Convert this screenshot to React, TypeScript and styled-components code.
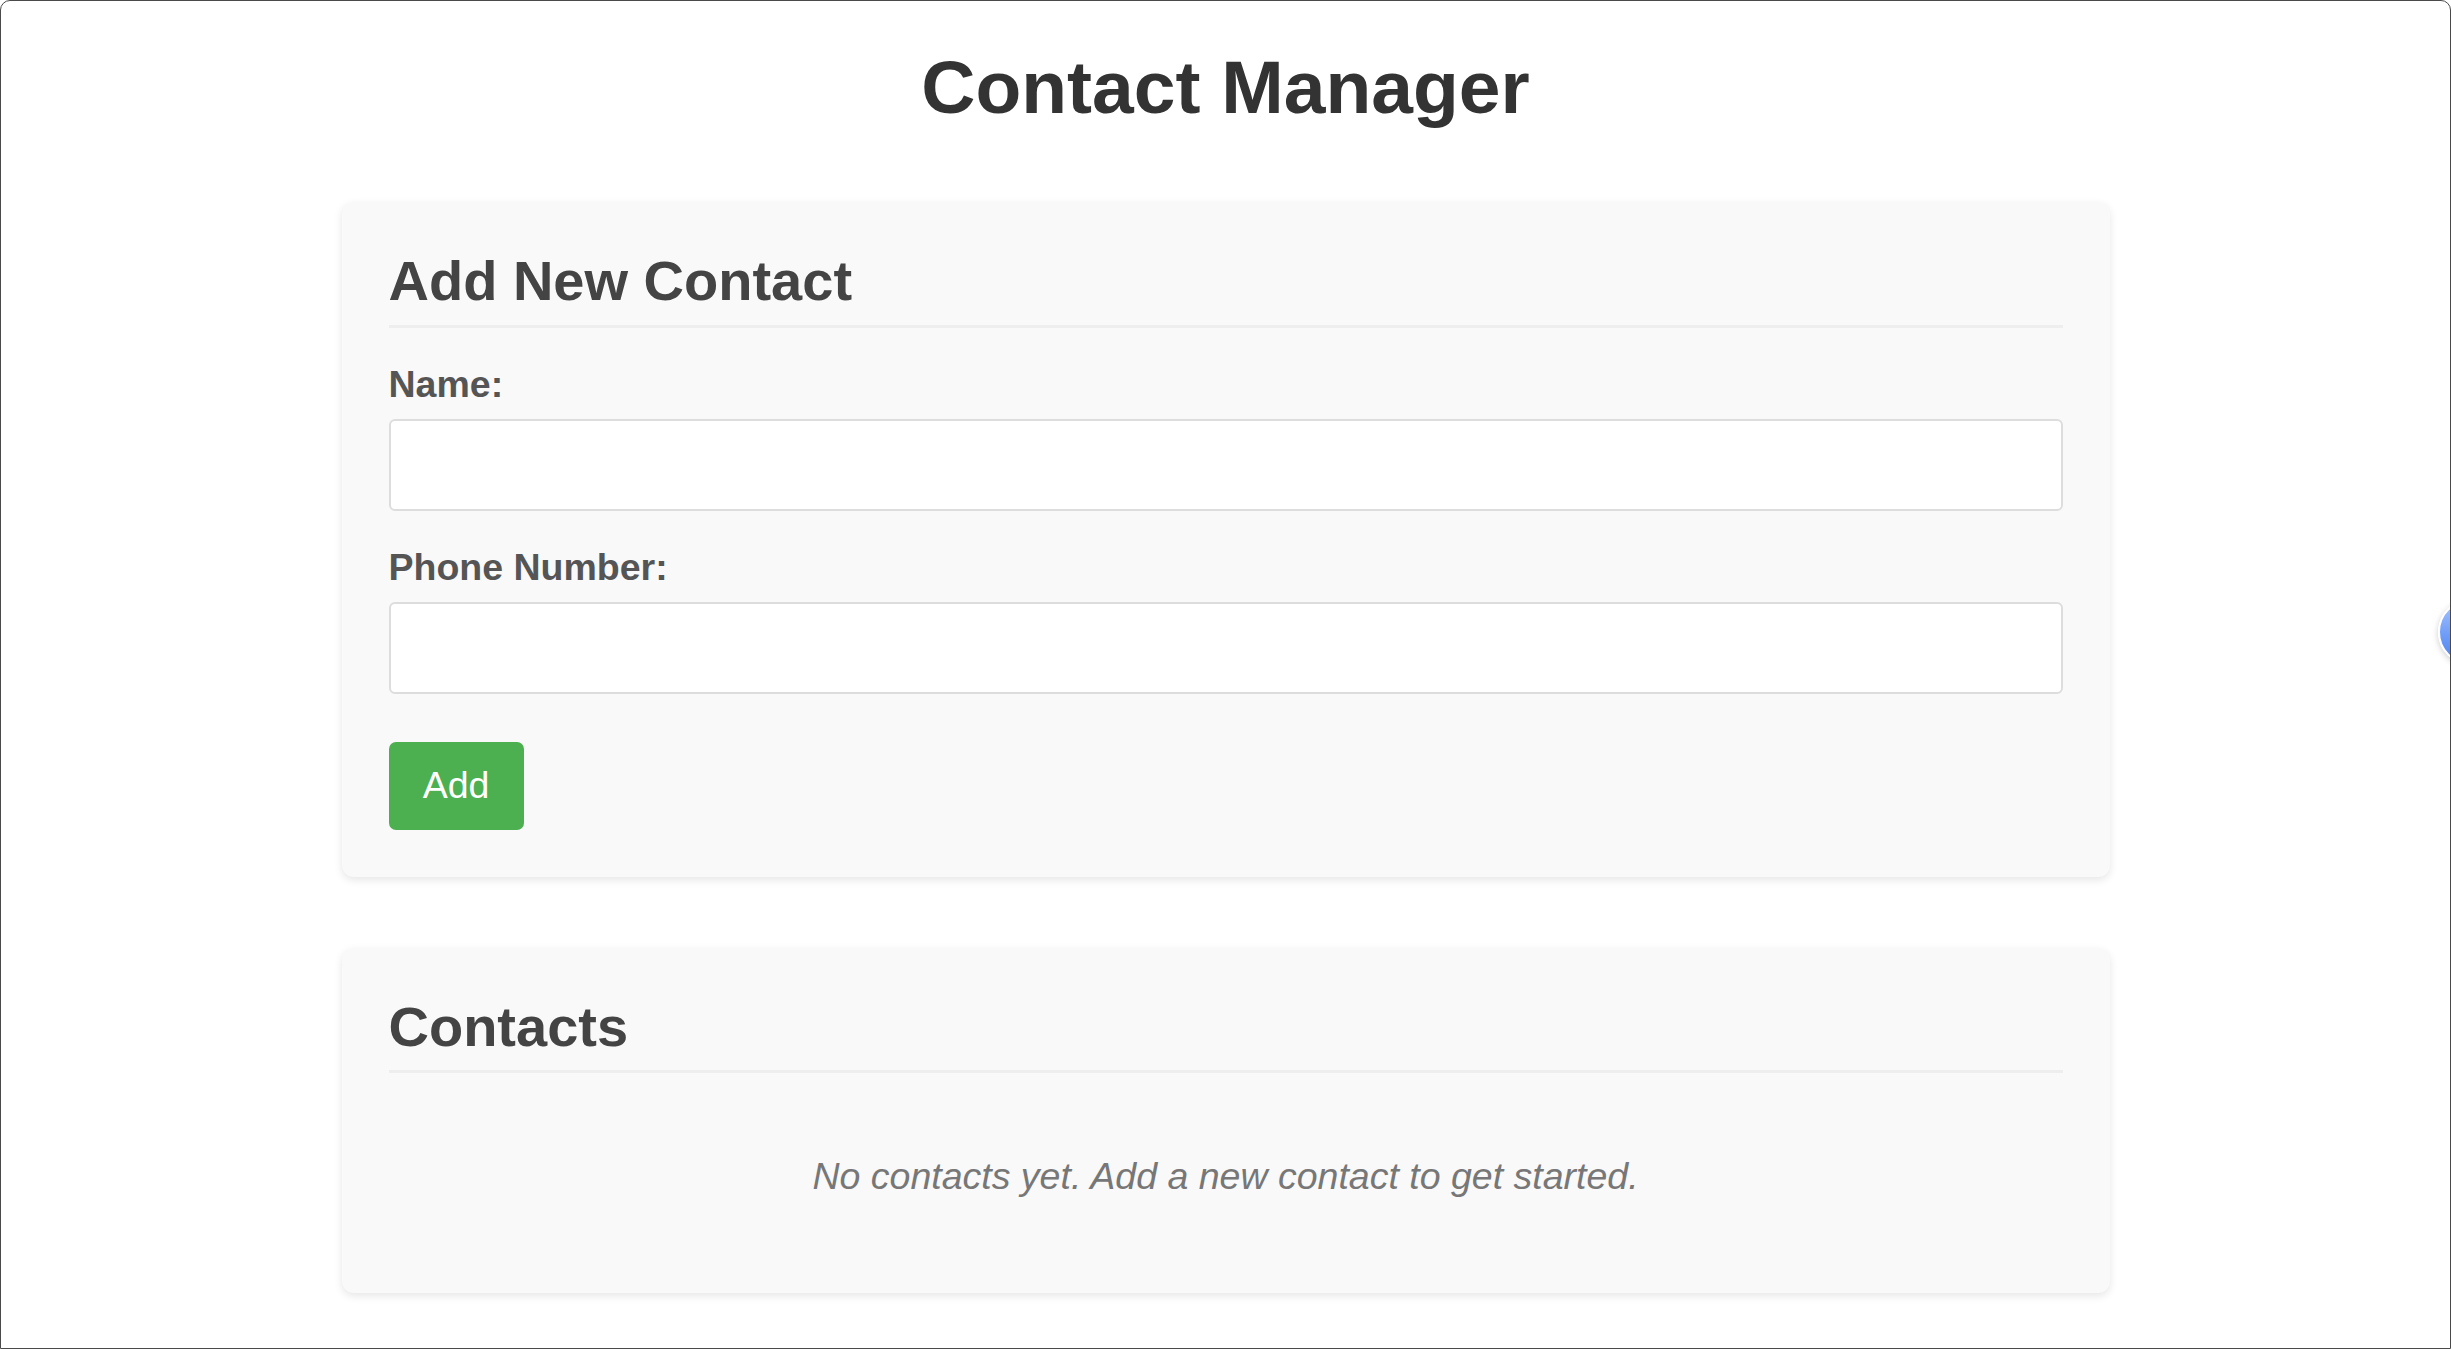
import { useState } from 'react'
import styled, { createGlobalStyle } from 'styled-components'

const GlobalStyle = createGlobalStyle`
  html, body {
    margin: 0;
    padding: 0;
    background: #fff;
  }
  body {
    font-family: "Liberation Sans", Arial, sans-serif;
    font-size: 37.5px;
    color: #333;
  }
  * {
    box-sizing: border-box;
  }
`

const Page = styled.div`
  min-height: 1349px;
  padding: 44px 0 40px;
`

const Container = styled.div`
  max-width: 1768px;
  margin: 0 auto;
`

const Title = styled.h1`
  margin: 0 0 72px;
  font-size: 75px;
  line-height: 1.15;
  font-weight: 700;
  text-align: center;
  color: #333;
`

const Card = styled.section`
  background: #f9f9f9;
  border-radius: 12px;
  padding: 47px;
  margin-bottom: 71px;
  box-shadow: 0 3px 8px rgba(0, 0, 0, 0.1);
`

const CardTitle = styled.h2`
  margin: 0 0 35px;
  padding-bottom: 11px;
  border-bottom: 3px solid #eee;
  font-size: 56px;
  line-height: 1.15;
  font-weight: 700;
  color: #444;
`

const FormGroup = styled.div`
  margin-bottom: 35px;
`

const Label = styled.label`
  display: block;
  margin-bottom: 13px;
  font-size: 37.5px;
  line-height: 1.15;
  font-weight: 700;
  color: #555;
`

const Input = styled.input`
  display: block;
  width: 100%;
  height: 92px;
  padding: 0 23px;
  border: 2px solid #ddd;
  border-radius: 6px;
  background: #fff;
  font-family: inherit;
  font-size: 37.5px;
  color: #333;
  outline: none;
`

const AddButton = styled.button`
  display: block;
  margin-top: 48px;
  width: 135px;
  height: 88px;
  padding: 0;
  border: none;
  border-radius: 7px;
  background: #4caf50;
  color: #fff;
  font-family: inherit;
  font-size: 37.5px;
  cursor: pointer;
`

const EmptyState = styled.p`
  margin: 0;
  padding: 47px 0 48px;
  text-align: center;
  font-style: italic;
  font-size: 37.5px;
  line-height: 1.15;
  color: #777;
`

const ContactRow = styled.div`
  display: flex;
  justify-content: space-between;
  padding: 20px 0;
  border-bottom: 2px solid #eee;
  color: #444;
`

// the window frame and the floating side button sit over the page
const Frame = styled.div`
  position: fixed;
  inset: 0;
  border: 1px solid #4a4a4a;
  border-radius: 10px 10px 0 0;
  pointer-events: none;
`

const SideBubble = styled.div`
  position: fixed;
  top: 599px;
  right: -53px;
  width: 66px;
  height: 66px;
  border-radius: 50%;
  border: 2px solid #fff;
  background: linear-gradient(180deg, #a9c6ff 0%, #6f9cf7 55%, #4d82f0 100%);
  box-shadow: 0 2px 6px rgba(0, 0, 0, 0.2);
`

type Contact = { name: string; phone: string }

const App = () => {
  const [name, setName] = useState('')
  const [phone, setPhone] = useState('')
  const [contacts, setContacts] = useState<Contact[]>([])

  const add = () => {
    if (!name.trim() || !phone.trim()) return
    setContacts([...contacts, { name, phone }])
    setName('')
    setPhone('')
  }

  return (
    <>
      <GlobalStyle />
      <Page>
        <Container>
          <Title>Contact Manager</Title>
          <Card>
            <CardTitle>Add New Contact</CardTitle>
            <FormGroup>
              <Label htmlFor="name">Name:</Label>
              <Input id="name" value={name} onChange={e => setName(e.target.value)} />
            </FormGroup>
            <FormGroup>
              <Label htmlFor="phone">Phone Number:</Label>
              <Input id="phone" value={phone} onChange={e => setPhone(e.target.value)} />
            </FormGroup>
            <AddButton onClick={add}>Add</AddButton>
          </Card>
          <Card>
            <CardTitle>Contacts</CardTitle>
            {contacts.length === 0 ? (
              <EmptyState>No contacts yet. Add a new contact to get started.</EmptyState>
            ) : (
              contacts.map((c, i) => (
                <ContactRow key={i}>
                  <span>{c.name}</span>
                  <span>{c.phone}</span>
                </ContactRow>
              ))
            )}
          </Card>
        </Container>
      </Page>
      <SideBubble />
      <Frame />
    </>
  )
}

export default App
